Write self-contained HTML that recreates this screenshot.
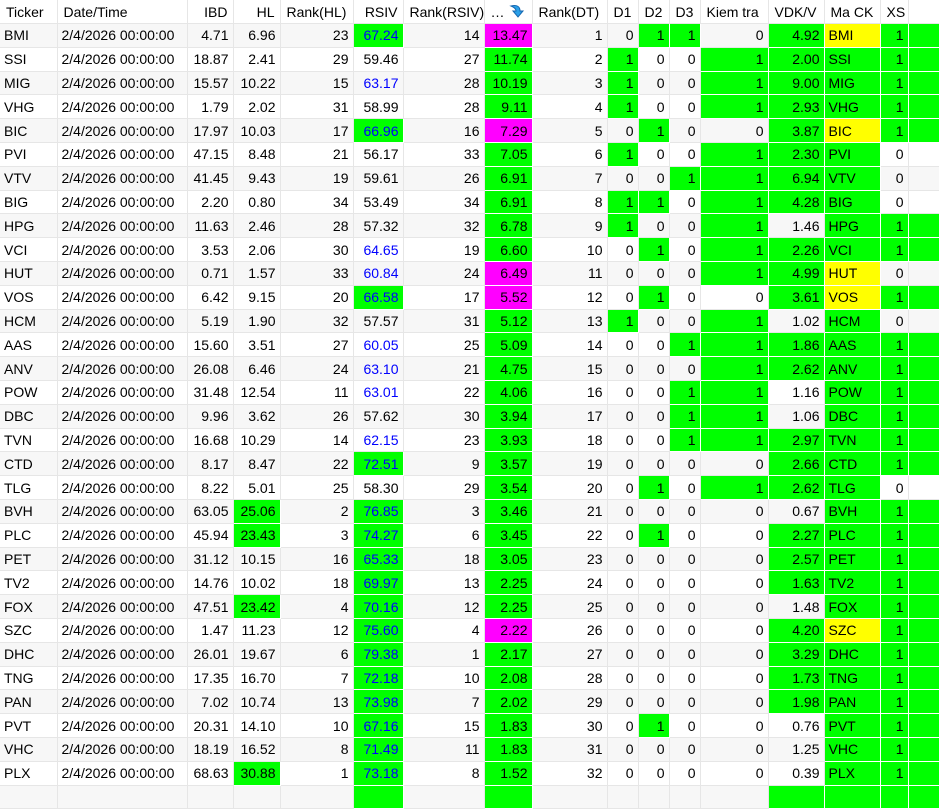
<!DOCTYPE html>
<html><head><meta charset="utf-8">
<style>
html,body{margin:0;padding:0;background:#fff;}
body{width:939px;height:798px;overflow:hidden;font-family:"Liberation Sans",sans-serif;font-size:14px;color:#000;}
table{border-collapse:collapse;table-layout:fixed;width:939px;}
td,th{border:1px solid #e6e6e6;padding:0 4px;height:22.8px;text-align:right;white-space:nowrap;overflow:hidden;font-weight:normal;}
th{height:23px;text-align:left;padding-left:6px;border-top:none;}
th.r{text-align:right;padding-right:5px}
tr:nth-child(even) td{background:#f7f7f7}
td.l{text-align:left}
tr td.g{background:#00ff00;border-color:#fff}
tr td.m{background:#ff00ff;border-color:#fff}
tr td.y{background:#ffff00;border-color:#fff}
td.b{color:#0000ff}
td:first-child,th:first-child{border-left:none}
</style></head><body>
<table>
<colgroup><col style="width:57px"><col style="width:130px"><col style="width:46px"><col style="width:47px"><col style="width:73px"><col style="width:50px"><col style="width:81px"><col style="width:48px"><col style="width:75px"><col style="width:31px"><col style="width:31px"><col style="width:31px"><col style="width:68px"><col style="width:56px"><col style="width:56px"><col style="width:28px"><col style="width:31px"></colgroup>
<tr><th>Ticker</th><th>Date/Time</th><th class="r">IBD</th><th class="r">HL</th><th>Rank(HL)</th><th class="r">RSIV</th><th>Rank(RSIV)</th><th>… <svg width="18" height="16" viewBox="0 0 18 16" style="vertical-align:-2px"><path d="M3 3 Q12 1 12 8 L15 8 L10 14 L5 8 L8 8 Q8 5 3 3Z" fill="#2aa0e8" stroke="#1466b0" stroke-width="1"/></svg></th><th>Rank(DT)</th><th>D1</th><th>D2</th><th>D3</th><th>Kiem tra</th><th>VDK/V</th><th>Ma CK</th><th>XS</th><th></th></tr>
<tr><td class="l">BMI</td><td class="l">2/4/2026 00:00:00</td><td>4.71</td><td>6.96</td><td>23</td><td class="g b">67.24</td><td>14</td><td class="m">13.47</td><td>1</td><td>0</td><td class="g">1</td><td class="g">1</td><td>0</td><td class="g">4.92</td><td class="y l">BMI</td><td class="g">1</td><td class="g"></td></tr>
<tr><td class="l">SSI</td><td class="l">2/4/2026 00:00:00</td><td>18.87</td><td>2.41</td><td>29</td><td>59.46</td><td>27</td><td class="g">11.74</td><td>2</td><td class="g">1</td><td>0</td><td>0</td><td class="g">1</td><td class="g">2.00</td><td class="g l">SSI</td><td class="g">1</td><td class="g"></td></tr>
<tr><td class="l">MIG</td><td class="l">2/4/2026 00:00:00</td><td>15.57</td><td>10.22</td><td>15</td><td class="b">63.17</td><td>28</td><td class="g">10.19</td><td>3</td><td class="g">1</td><td>0</td><td>0</td><td class="g">1</td><td class="g">9.00</td><td class="g l">MIG</td><td class="g">1</td><td class="g"></td></tr>
<tr><td class="l">VHG</td><td class="l">2/4/2026 00:00:00</td><td>1.79</td><td>2.02</td><td>31</td><td>58.99</td><td>28</td><td class="g">9.11</td><td>4</td><td class="g">1</td><td>0</td><td>0</td><td class="g">1</td><td class="g">2.93</td><td class="g l">VHG</td><td class="g">1</td><td class="g"></td></tr>
<tr><td class="l">BIC</td><td class="l">2/4/2026 00:00:00</td><td>17.97</td><td>10.03</td><td>17</td><td class="g b">66.96</td><td>16</td><td class="m">7.29</td><td>5</td><td>0</td><td class="g">1</td><td>0</td><td>0</td><td class="g">3.87</td><td class="y l">BIC</td><td class="g">1</td><td class="g"></td></tr>
<tr><td class="l">PVI</td><td class="l">2/4/2026 00:00:00</td><td>47.15</td><td>8.48</td><td>21</td><td>56.17</td><td>33</td><td class="g">7.05</td><td>6</td><td class="g">1</td><td>0</td><td>0</td><td class="g">1</td><td class="g">2.30</td><td class="g l">PVI</td><td>0</td><td></td></tr>
<tr><td class="l">VTV</td><td class="l">2/4/2026 00:00:00</td><td>41.45</td><td>9.43</td><td>19</td><td>59.61</td><td>26</td><td class="g">6.91</td><td>7</td><td>0</td><td>0</td><td class="g">1</td><td class="g">1</td><td class="g">6.94</td><td class="g l">VTV</td><td>0</td><td></td></tr>
<tr><td class="l">BIG</td><td class="l">2/4/2026 00:00:00</td><td>2.20</td><td>0.80</td><td>34</td><td>53.49</td><td>34</td><td class="g">6.91</td><td>8</td><td class="g">1</td><td class="g">1</td><td>0</td><td class="g">1</td><td class="g">4.28</td><td class="g l">BIG</td><td>0</td><td></td></tr>
<tr><td class="l">HPG</td><td class="l">2/4/2026 00:00:00</td><td>11.63</td><td>2.46</td><td>28</td><td>57.32</td><td>32</td><td class="g">6.78</td><td>9</td><td class="g">1</td><td>0</td><td>0</td><td class="g">1</td><td>1.46</td><td class="g l">HPG</td><td class="g">1</td><td class="g"></td></tr>
<tr><td class="l">VCI</td><td class="l">2/4/2026 00:00:00</td><td>3.53</td><td>2.06</td><td>30</td><td class="b">64.65</td><td>19</td><td class="g">6.60</td><td>10</td><td>0</td><td class="g">1</td><td>0</td><td class="g">1</td><td class="g">2.26</td><td class="g l">VCI</td><td class="g">1</td><td class="g"></td></tr>
<tr><td class="l">HUT</td><td class="l">2/4/2026 00:00:00</td><td>0.71</td><td>1.57</td><td>33</td><td class="b">60.84</td><td>24</td><td class="m">6.49</td><td>11</td><td>0</td><td>0</td><td>0</td><td class="g">1</td><td class="g">4.99</td><td class="y l">HUT</td><td>0</td><td></td></tr>
<tr><td class="l">VOS</td><td class="l">2/4/2026 00:00:00</td><td>6.42</td><td>9.15</td><td>20</td><td class="g b">66.58</td><td>17</td><td class="m">5.52</td><td>12</td><td>0</td><td class="g">1</td><td>0</td><td>0</td><td class="g">3.61</td><td class="y l">VOS</td><td class="g">1</td><td class="g"></td></tr>
<tr><td class="l">HCM</td><td class="l">2/4/2026 00:00:00</td><td>5.19</td><td>1.90</td><td>32</td><td>57.57</td><td>31</td><td class="g">5.12</td><td>13</td><td class="g">1</td><td>0</td><td>0</td><td class="g">1</td><td>1.02</td><td class="g l">HCM</td><td>0</td><td></td></tr>
<tr><td class="l">AAS</td><td class="l">2/4/2026 00:00:00</td><td>15.60</td><td>3.51</td><td>27</td><td class="b">60.05</td><td>25</td><td class="g">5.09</td><td>14</td><td>0</td><td>0</td><td class="g">1</td><td class="g">1</td><td class="g">1.86</td><td class="g l">AAS</td><td class="g">1</td><td class="g"></td></tr>
<tr><td class="l">ANV</td><td class="l">2/4/2026 00:00:00</td><td>26.08</td><td>6.46</td><td>24</td><td class="b">63.10</td><td>21</td><td class="g">4.75</td><td>15</td><td>0</td><td>0</td><td>0</td><td class="g">1</td><td class="g">2.62</td><td class="g l">ANV</td><td class="g">1</td><td class="g"></td></tr>
<tr><td class="l">POW</td><td class="l">2/4/2026 00:00:00</td><td>31.48</td><td>12.54</td><td>11</td><td class="b">63.01</td><td>22</td><td class="g">4.06</td><td>16</td><td>0</td><td>0</td><td class="g">1</td><td class="g">1</td><td>1.16</td><td class="g l">POW</td><td class="g">1</td><td class="g"></td></tr>
<tr><td class="l">DBC</td><td class="l">2/4/2026 00:00:00</td><td>9.96</td><td>3.62</td><td>26</td><td>57.62</td><td>30</td><td class="g">3.94</td><td>17</td><td>0</td><td>0</td><td class="g">1</td><td class="g">1</td><td>1.06</td><td class="g l">DBC</td><td class="g">1</td><td class="g"></td></tr>
<tr><td class="l">TVN</td><td class="l">2/4/2026 00:00:00</td><td>16.68</td><td>10.29</td><td>14</td><td class="b">62.15</td><td>23</td><td class="g">3.93</td><td>18</td><td>0</td><td>0</td><td class="g">1</td><td class="g">1</td><td class="g">2.97</td><td class="g l">TVN</td><td class="g">1</td><td class="g"></td></tr>
<tr><td class="l">CTD</td><td class="l">2/4/2026 00:00:00</td><td>8.17</td><td>8.47</td><td>22</td><td class="g b">72.51</td><td>9</td><td class="g">3.57</td><td>19</td><td>0</td><td>0</td><td>0</td><td>0</td><td class="g">2.66</td><td class="g l">CTD</td><td class="g">1</td><td class="g"></td></tr>
<tr><td class="l">TLG</td><td class="l">2/4/2026 00:00:00</td><td>8.22</td><td>5.01</td><td>25</td><td>58.30</td><td>29</td><td class="g">3.54</td><td>20</td><td>0</td><td class="g">1</td><td>0</td><td class="g">1</td><td class="g">2.62</td><td class="g l">TLG</td><td>0</td><td></td></tr>
<tr><td class="l">BVH</td><td class="l">2/4/2026 00:00:00</td><td>63.05</td><td class="g">25.06</td><td>2</td><td class="g b">76.85</td><td>3</td><td class="g">3.46</td><td>21</td><td>0</td><td>0</td><td>0</td><td>0</td><td>0.67</td><td class="g l">BVH</td><td class="g">1</td><td class="g"></td></tr>
<tr><td class="l">PLC</td><td class="l">2/4/2026 00:00:00</td><td>45.94</td><td class="g">23.43</td><td>3</td><td class="g b">74.27</td><td>6</td><td class="g">3.45</td><td>22</td><td>0</td><td class="g">1</td><td>0</td><td>0</td><td class="g">2.27</td><td class="g l">PLC</td><td class="g">1</td><td class="g"></td></tr>
<tr><td class="l">PET</td><td class="l">2/4/2026 00:00:00</td><td>31.12</td><td>10.15</td><td>16</td><td class="g b">65.33</td><td>18</td><td class="g">3.05</td><td>23</td><td>0</td><td>0</td><td>0</td><td>0</td><td class="g">2.57</td><td class="g l">PET</td><td class="g">1</td><td class="g"></td></tr>
<tr><td class="l">TV2</td><td class="l">2/4/2026 00:00:00</td><td>14.76</td><td>10.02</td><td>18</td><td class="g b">69.97</td><td>13</td><td class="g">2.25</td><td>24</td><td>0</td><td>0</td><td>0</td><td>0</td><td class="g">1.63</td><td class="g l">TV2</td><td class="g">1</td><td class="g"></td></tr>
<tr><td class="l">FOX</td><td class="l">2/4/2026 00:00:00</td><td>47.51</td><td class="g">23.42</td><td>4</td><td class="g b">70.16</td><td>12</td><td class="g">2.25</td><td>25</td><td>0</td><td>0</td><td>0</td><td>0</td><td>1.48</td><td class="g l">FOX</td><td class="g">1</td><td class="g"></td></tr>
<tr><td class="l">SZC</td><td class="l">2/4/2026 00:00:00</td><td>1.47</td><td>11.23</td><td>12</td><td class="g b">75.60</td><td>4</td><td class="m">2.22</td><td>26</td><td>0</td><td>0</td><td>0</td><td>0</td><td class="g">4.20</td><td class="y l">SZC</td><td class="g">1</td><td class="g"></td></tr>
<tr><td class="l">DHC</td><td class="l">2/4/2026 00:00:00</td><td>26.01</td><td>19.67</td><td>6</td><td class="g b">79.38</td><td>1</td><td class="g">2.17</td><td>27</td><td>0</td><td>0</td><td>0</td><td>0</td><td class="g">3.29</td><td class="g l">DHC</td><td class="g">1</td><td class="g"></td></tr>
<tr><td class="l">TNG</td><td class="l">2/4/2026 00:00:00</td><td>17.35</td><td>16.70</td><td>7</td><td class="g b">72.18</td><td>10</td><td class="g">2.08</td><td>28</td><td>0</td><td>0</td><td>0</td><td>0</td><td class="g">1.73</td><td class="g l">TNG</td><td class="g">1</td><td class="g"></td></tr>
<tr><td class="l">PAN</td><td class="l">2/4/2026 00:00:00</td><td>7.02</td><td>10.74</td><td>13</td><td class="g b">73.98</td><td>7</td><td class="g">2.02</td><td>29</td><td>0</td><td>0</td><td>0</td><td>0</td><td class="g">1.98</td><td class="g l">PAN</td><td class="g">1</td><td class="g"></td></tr>
<tr><td class="l">PVT</td><td class="l">2/4/2026 00:00:00</td><td>20.31</td><td>14.10</td><td>10</td><td class="g b">67.16</td><td>15</td><td class="g">1.83</td><td>30</td><td>0</td><td class="g">1</td><td>0</td><td>0</td><td>0.76</td><td class="g l">PVT</td><td class="g">1</td><td class="g"></td></tr>
<tr><td class="l">VHC</td><td class="l">2/4/2026 00:00:00</td><td>18.19</td><td>16.52</td><td>8</td><td class="g b">71.49</td><td>11</td><td class="g">1.83</td><td>31</td><td>0</td><td>0</td><td>0</td><td>0</td><td>1.25</td><td class="g l">VHC</td><td class="g">1</td><td class="g"></td></tr>
<tr><td class="l">PLX</td><td class="l">2/4/2026 00:00:00</td><td>68.63</td><td class="g">30.88</td><td>1</td><td class="g b">73.18</td><td>8</td><td class="g">1.52</td><td>32</td><td>0</td><td>0</td><td>0</td><td>0</td><td>0.39</td><td class="g l">PLX</td><td class="g">1</td><td class="g"></td></tr>
<tr><td></td><td></td><td></td><td></td><td></td><td class="g"></td><td></td><td class="g"></td><td></td><td></td><td></td><td></td><td></td><td class="g"></td><td class="g"></td><td class="g"></td><td class="g"></td></tr>
</table>
</body></html>
